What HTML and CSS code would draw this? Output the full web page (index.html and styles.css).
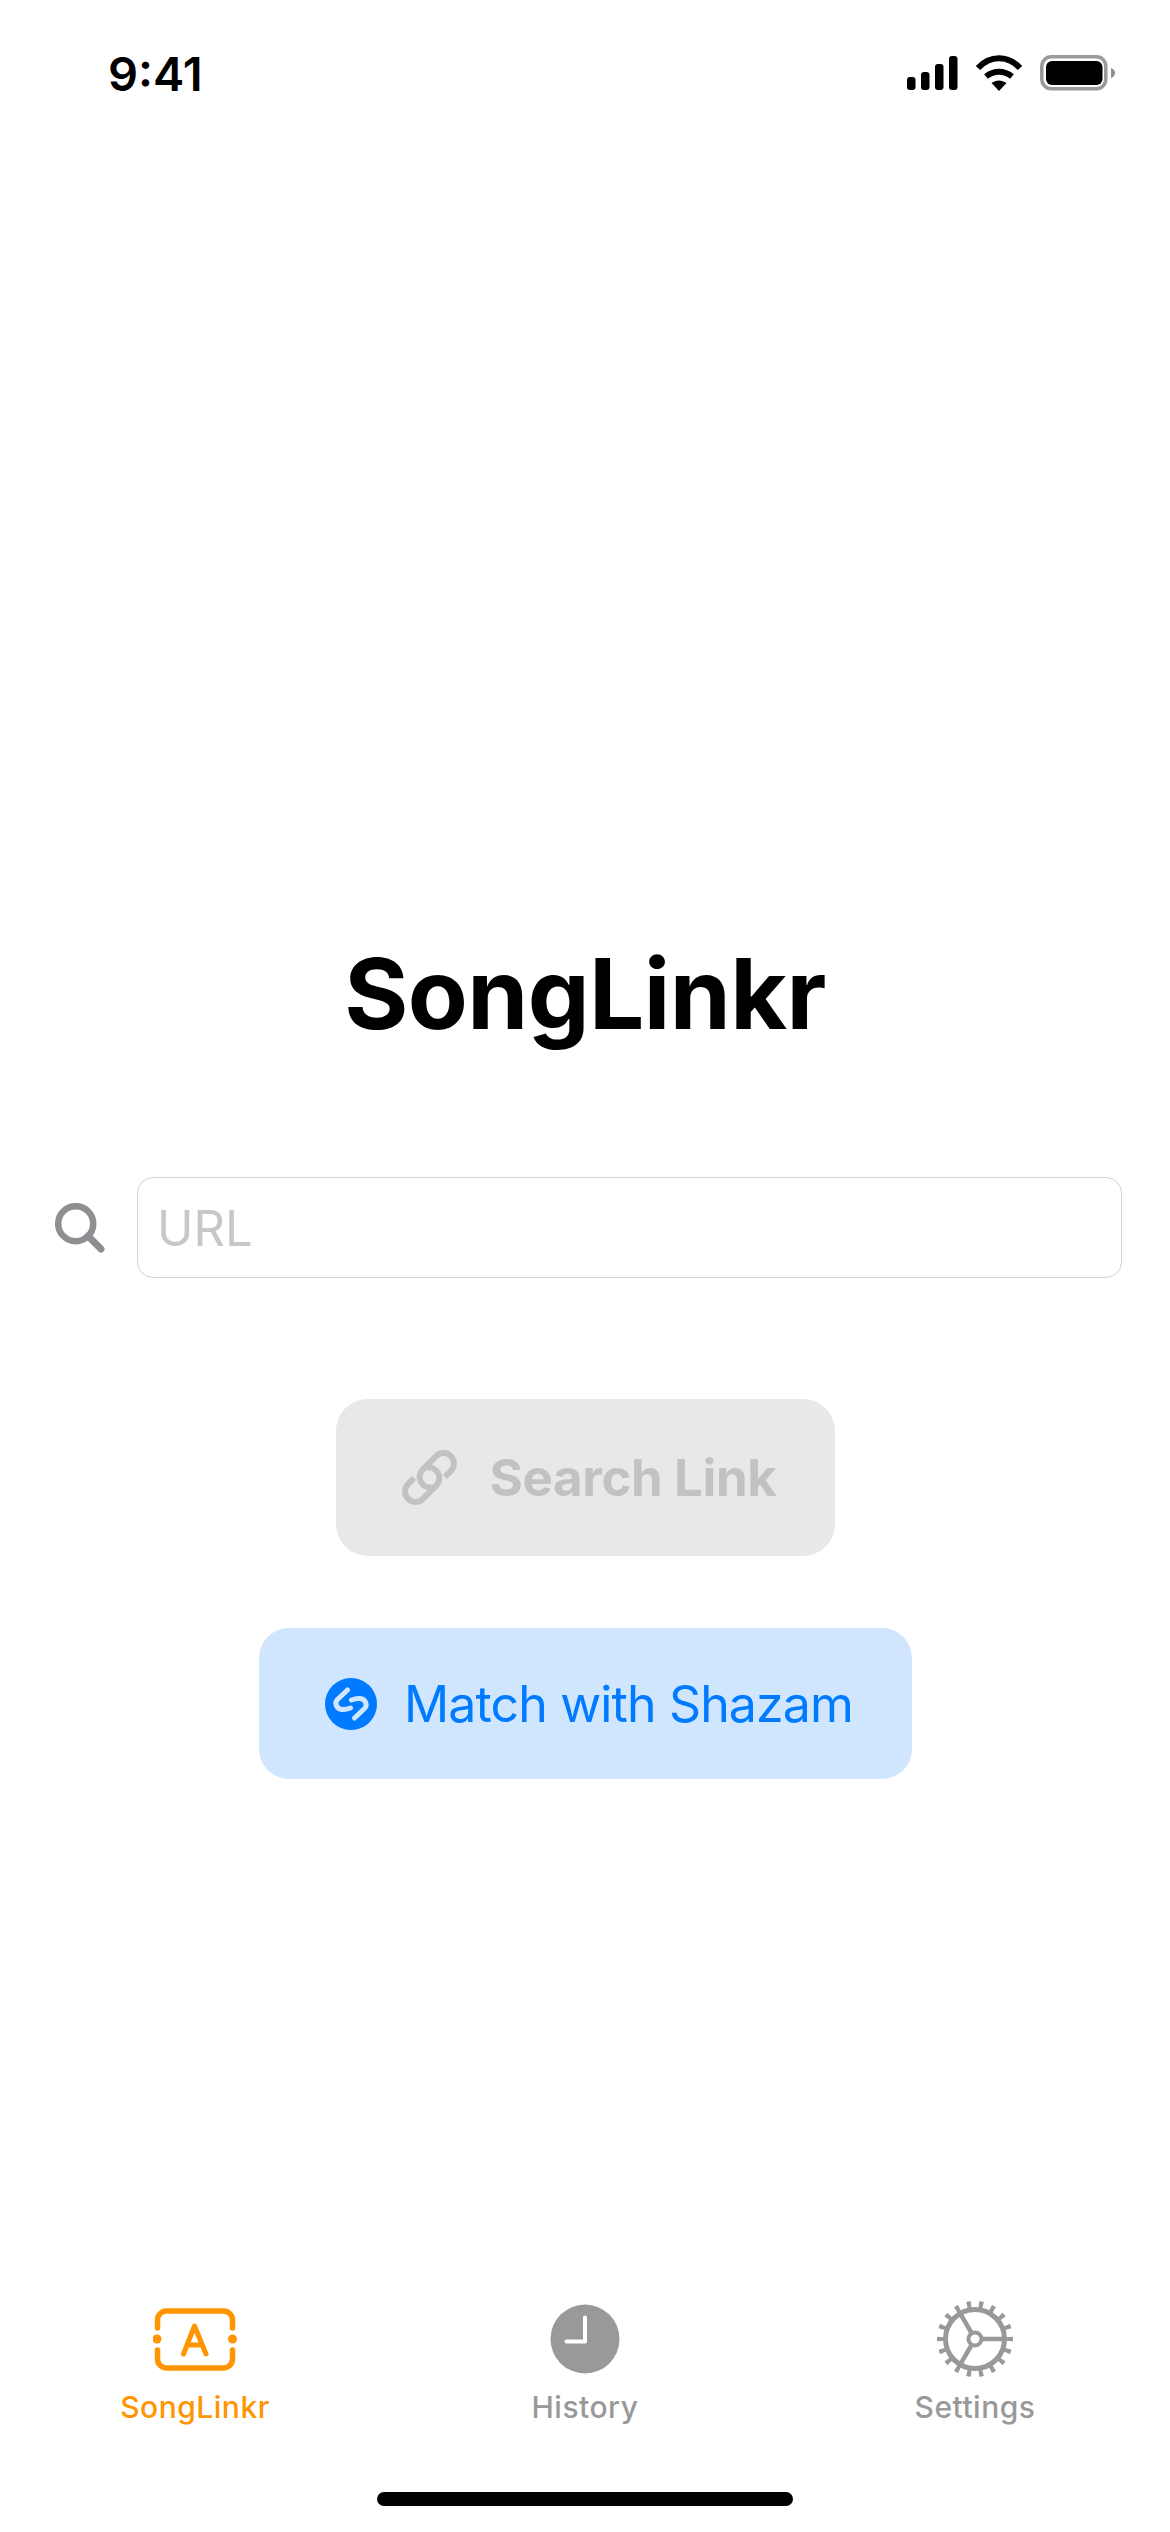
FILE: index.html
```html
<!DOCTYPE html>
<html lang="en">
<head>
    <meta charset="UTF-8">
    <meta name="viewport" content="width=device-width, initial-scale=1.0">
    <title>SongLinkr</title>
    <link rel="stylesheet" href="styles.css">
</head>
<body>
    <div class="screen">
        <div class="status-bar">
            <span class="time">9:41</span>
            <div class="status-icons">
                <svg width="51" height="34" viewBox="0 0 51 34" fill="#000">
                    <rect x="0" y="21" width="8.5" height="13" rx="3"/>
                    <rect x="14" y="16" width="8.5" height="18" rx="3"/>
                    <rect x="28" y="8" width="8.5" height="26" rx="3"/>
                    <rect x="42" y="0" width="8.5" height="34" rx="3"/>
                </svg>
                <svg width="48" height="36" viewBox="0 0 48 36">
                    <path d="M3 13C15 0 33 0 45 13" fill="none" stroke="#000" stroke-width="6"/>
                    <path d="M11 21.5C19 15 29 15 37 21.5" fill="none" stroke="#000" stroke-width="6"/>
                    <path d="M24 36L16.5 28C21 24.5 27 24.5 31.5 28Z" fill="#000"/>
                </svg>
                <svg width="76" height="36" viewBox="0 0 76 36">
                    <rect x="1.8" y="1.8" width="64" height="32" rx="9.5" fill="none" stroke="#9a9a9a" stroke-width="3.5"/>
                    <rect x="6" y="6" width="56.5" height="24" rx="6" fill="#000"/>
                    <path d="M71 13C74 14 75 16 75 18C75 20 74 22 71 23Z" fill="#8e8e8e"/>
                </svg>
            </div>
        </div>

        <div class="main">
            <h1>SongLinkr</h1>
            <div class="search-row">
                <svg width="50" height="50" viewBox="0 0 50 50" fill="none" stroke="#8e8e93">
                    <circle cx="20.7" cy="20.7" r="17.5" stroke-width="6.5"/>
                    <path d="M33 33L46 46" stroke-width="7" stroke-linecap="round"/>
                </svg>
                <input class="url-input" type="text" placeholder="URL">
            </div>
            <button class="btn btn-search" type="button" disabled>
                <svg width="55" height="55" viewBox="0 0 55 55" fill="none" stroke="#c2c2c5" stroke-width="6">
                    <path d="M43 27L49.4 20.4A10.5 10.5 0 0 0 34.6 5.6L20.6 19.6A10.5 10.5 0 0 0 30 37.2"/>
                    <path d="M12 28L5.6 34.6A10.5 10.5 0 0 0 20.4 49.4L34.4 35.4A10.5 10.5 0 0 0 25 17.8"/>
                </svg>
                <span>Search Link</span>
            </button>
            <button class="btn btn-shazam" type="button">
                <svg width="52" height="52" viewBox="0 0 52 52">
                    <circle cx="26" cy="26" r="26" fill="#007aff"/>
                    <g fill="none" stroke="#d0e5fe" stroke-width="5" stroke-linecap="round">
                        <path d="M22.500 12L12.500 21.500C9 25 11.500 31 17 31.500C20 31.800 23 31 25.500 30"/>
                        <path d="M29.500 40L39.500 30.500C43 27 40.500 21 35 20.500C32 20.200 29 21 26.500 22"/>
                    </g>
                </svg>
                <span>Match with Shazam</span>
            </button>
        </div>

        <div class="tab-bar">
            <div class="tab active">
                <div class="tab-icon">
                    <svg width="84" height="63" viewBox="0 0 84 63" fill="none" stroke="#ff9500" stroke-width="5.5" stroke-linecap="round" stroke-linejoin="round">
                        <path d="M4.500 20V12A9 9 0 0 1 13.500 3H70.500A9 9 0 0 1 79.500 12V20"/>
                        <path d="M4.500 42V51A9 9 0 0 0 13.500 60H70.500A9 9 0 0 0 79.500 51V42"/>
                        <path d="M30.500 46L41.500 18L53 46M34.500 37H49" stroke-width="5"/>
                        <circle cx="4" cy="31" r="4.500" fill="#ff9500" stroke="none"/>
                        <circle cx="79.500" cy="31" r="4.500" fill="#ff9500" stroke="none"/>
                    </svg>
                </div>
                <span>SongLinkr</span>
            </div>
            <div class="tab">
                <div class="tab-icon">
                    <svg width="70" height="70" viewBox="0 0 70 70">
                        <circle cx="35" cy="35" r="34.500" fill="#999"/>
                        <path d="M35 13.500V37.500H16.500" fill="none" stroke="#fff" stroke-width="4" stroke-linecap="round" stroke-linejoin="round"/>
                    </svg>
                </div>
                <span>History</span>
            </div>
            <div class="tab">
                <div class="tab-icon">
                    <svg width="78" height="78" viewBox="0 0 78 78" fill="none" stroke="#999">
                        <circle cx="39" cy="39" r="29.500" stroke-width="5"/>
                        <circle cx="39" cy="39" r="34.500" stroke-width="7" pathLength="360" stroke-dasharray="7 13" stroke-dashoffset="3.500"/>
                        <circle cx="39" cy="39" r="6.500" stroke-width="4"/>
                        <path d="M47 39H67M35 32L25 14.800M35 46L25 63.200" stroke-width="4.500"/>
                    </svg>
                </div>
                <span>Settings</span>
            </div>
        </div>

        <div class="home-indicator"></div>
    </div>
</body>
</html>
```

FILE: styles.css
```css
/* General body styling */
body {
    margin: 0;
    font-family: Inter, "Noto Sans", sans-serif;
    background: #fff;
    color: #000;
}

.screen {
    display: flex;
    flex-direction: column;
    height: 2532px;
    overflow: hidden;
}

/* Status bar */
.status-bar {
    display: flex;
    justify-content: space-between;
    align-items: center;
    height: 146px;
    padding: 0 54px 0 108px;
}

.time {
    font-size: 47px;
    font-weight: 600;
}

.status-icons {
    display: flex;
    align-items: center;
    gap: 17px;
}

/* Center content */
.main {
    display: flex;
    flex-direction: column;
    align-items: center;
}

h1 {
    margin: 788px 0 123px;
    font-size: 98px;
    line-height: 120px;
    font-weight: 700;
    letter-spacing: -0.6px;
}

/* Search row */
.search-row {
    display: flex;
    align-items: center;
    gap: 32px;
    align-self: stretch;
    padding: 0 48px 0 55px;
}

.url-input {
    flex: 1;
    min-width: 0;
    height: 101px;
    box-sizing: border-box;
    padding: 2px 19px 0;
    border: 1.5px solid #d2d2d4;
    border-radius: 16px;
    background: #fff;
    font-family: inherit;
    font-size: 49px;
}

.url-input::placeholder {
    color: #c7c7c9;
}

/* Button styling */
.btn {
    display: flex;
    justify-content: center;
    align-items: center;
    box-sizing: border-box;
    border: none;
    font-family: inherit;
    padding: 0;
}

.btn-search {
    gap: 33px;
    width: 499px;
    height: 157px;
    margin-top: 121px;
    padding-left: 8px;
    border-radius: 32px;
    background: #e8e8ea;
    color: #c2c2c5;
    font-size: 51px;
    font-weight: 700;
    letter-spacing: -0.4px;
}

.btn-shazam {
    gap: 27px;
    width: 653px;
    height: 151px;
    margin-top: 72px;
    padding-left: 8px;
    border-radius: 30px;
    background: #d0e5fe;
    color: #007aff;
    font-size: 50px;
    font-weight: 400;
    letter-spacing: -0.85px;
}

/* Tab bar */
.tab-bar {
    display: grid;
    grid-template-columns: repeat(3, 1fr);
    margin-top: auto;
}

.tab {
    display: flex;
    flex-direction: column;
    align-items: center;
    gap: 8px;
    color: #999;
    font-size: 30px;
    font-weight: 500;
    letter-spacing: 0.5px;
}

.tab.active {
    color: #ff9500;
}

.tab-icon {
    display: flex;
    justify-content: center;
    align-items: center;
    height: 84px;
}

.home-indicator {
    width: 416px;
    height: 14px;
    margin: 67px auto 26px;
    border-radius: 7px;
    background: #000;
}
```
